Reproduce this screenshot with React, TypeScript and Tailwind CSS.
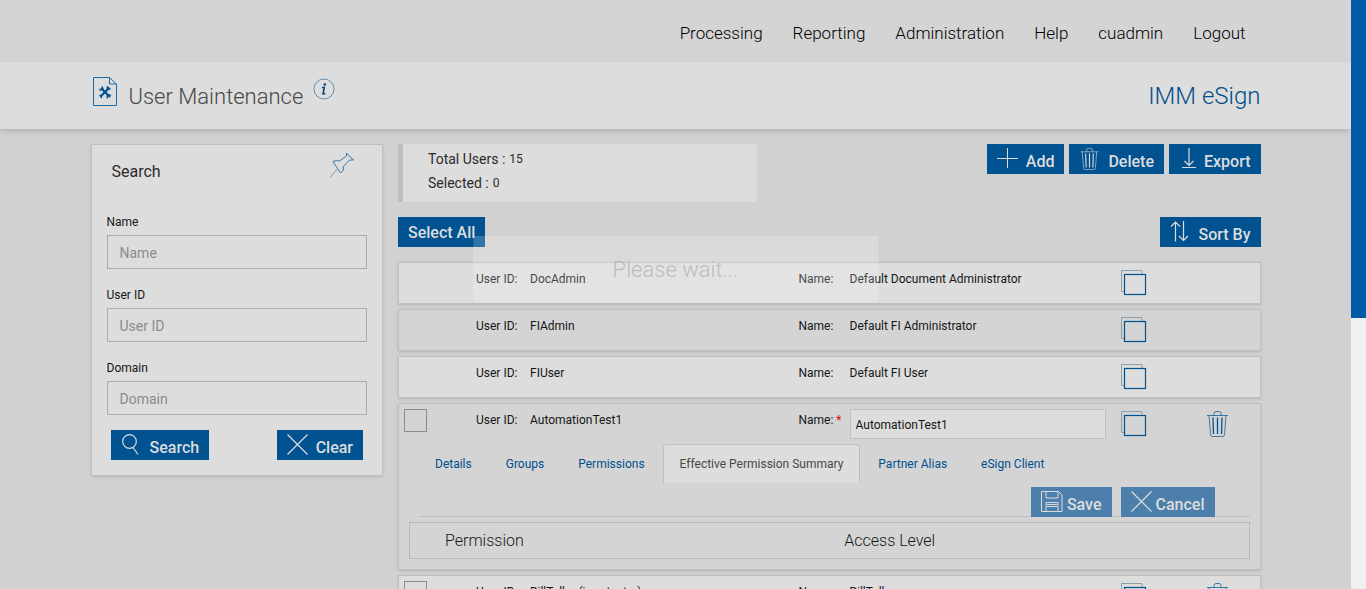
import type { ReactNode } from 'react';

const navLinks = ['Processing', 'Reporting', 'Administration', 'Help', 'cuadmin', 'Logout'];

const searchFields = [
  { id: 'search-name', label: 'Name' },
  { id: 'search-user-id', label: 'User ID' },
  { id: 'search-domain', label: 'Domain' },
];

const tabs = [
  'Details',
  'Groups',
  'Permissions',
  'Effective Permission Summary',
  'Partner Alias',
  'eSign Client',
];

const users = [
  { id: 'DocAdmin', name: 'Default Document Administrator', editable: false, open: false },
  { id: 'FIAdmin', name: 'Default FI Administrator', editable: false, open: false },
  { id: 'FIUser', name: 'Default FI User', editable: false, open: false },
  { id: 'AutomationTest1', name: 'AutomationTest1', editable: true, open: true },
  { id: 'BillTeller (jmmtester)', name: 'BillTeller', editable: true, open: false },
];

function PlusIcon() {
  return (
    <svg width="21" height="22" viewBox="0 0 21 22" fill="none" stroke="currentColor">
      <path d="M10.5 0v20M0 10.5h21" />
    </svg>
  );
}

function CrossIcon() {
  return (
    <svg width="21" height="22" viewBox="0 0 21 22" fill="none" stroke="currentColor" strokeWidth="1.2">
      <path d="M.5.5l20 20M20.5.5l-20 20" />
    </svg>
  );
}

function SearchIcon() {
  return (
    <svg width="21" height="22" viewBox="0 0 21 22" fill="none" stroke="currentColor" strokeWidth="1.2">
      <circle cx="8.5" cy="7.5" r="6.800" />
      <path d="M12 13.500l5 7" />
    </svg>
  );
}

function DownloadIcon() {
  return (
    <svg width="17" height="22" viewBox="0 0 17 22" fill="none" stroke="currentColor" strokeWidth="1.2">
      <path d="M10 0v17.500M5.500 13l4.500 4.500 4.500-4.500M3 19.500h14" />
    </svg>
  );
}

function SortIcon() {
  return (
    <svg width="20" height="22" viewBox="0 0 20 22" fill="none" stroke="currentColor" strokeWidth="1.2">
      <path d="M5.500 20.500V1M1 5.500L5.500 1 10 5.500M13.500 0v19.500M9 15l4.500 4.500L18 15" />
    </svg>
  );
}

function SaveIcon() {
  return (
    <svg width="22" height="22" viewBox="0 0 22 22" fill="none" stroke="currentColor">
      <path d="M.5.500h17l3.500 3.500v16.500H.5zM5 .500v6.500h12v-6.500M5 20.500v-9h12v9M6 13.500h10M6 15.500h10" />
    </svg>
  );
}

function TrashIcon({ className }: { className?: string }) {
  return (
    <svg className={className} width="21" height="26" viewBox="0 0 21 26" fill="none" stroke="currentColor">
      <path d="M0 4.500h21M7 4.500v-2q0-2 2-2h3q2 0 2 2v2M2 4.500l1.500 19q.2 2 1.500 2h11q1.300 0 1.500-2l1.500-19" strokeOpacity=".7" />
      <path d="M6 6.500l.5 16.500M10.500 6.500V23M15 6.500L14.500 23" strokeWidth="1.300" />
    </svg>
  );
}

function CopyIcon() {
  return (
    <svg width="26" height="26" viewBox="0 0 26 26" fill="none" stroke="#00528f">
      <path d="M4 21.500H.5V.5h20.500V4" stroke="#8b9fac" />
      <rect x="3.500" y="4.500" width="21" height="20" strokeWidth="1.200" />
    </svg>
  );
}

function PageIcon() {
  return (
    <svg width="24" height="30" viewBox="0 0 24 30" fill="none" stroke="#1d6ca5">
      <path d="M.5.5h16l7 6.500v21.500H.5zM16.500.5V7h7" />
      <path d="M8 11l9 9M16.500 10.500L7.500 19.500" stroke="#00528f" strokeWidth="2.200" />
      <path d="M6 12.500q2.500 1.500 4-1l-1-2M18 18.500q-2.500-1.500-4 .5l.5 2.500M14.500 9l-.5 3 3.500 0M6.500 18l2.500 3" stroke="#00528f" strokeWidth="1.300" />
    </svg>
  );
}

function InfoIcon() {
  return (
    <svg width="22" height="22" viewBox="0 0 22 22" fill="none">
      <circle cx="11" cy="11" r="10" stroke="#5a84a6" strokeWidth=".9" />
      <circle cx="11.800" cy="6.500" r="1.300" fill="#00437a" />
      <path d="M9 9.500h2.300l-1.300 6.300h2.300" stroke="#00437a" strokeWidth="1.500" />
    </svg>
  );
}

function PinIcon() {
  return (
    <svg width="26" height="26" viewBox="0 0 26 26" fill="none" stroke="#3a76a3">
      <path d="M17.500 1l7 7-4 0-6.500 7 .5 3-3 3L4 9.500l3.500-1 3 .5 7-5z" />
      <path d="M8.500 16.500L1 25.500" stroke="#7f9cb1" />
    </svg>
  );
}

type ButtonProps = {
  label: string;
  icon?: ReactNode;
  className?: string;
};

function Button({ label, icon, className = 'gap-2 bg-[#005291]' }: ButtonProps) {
  return (
    <button type="button" className={`flex h-[30px] items-center px-2.5 text-base font-medium text-[#dddddd] ${className}`}>
      {icon}
      <span className={icon ? 'pt-1.5' : 'pt-0.5'}>{label}</span>
    </button>
  );
}

function SearchPanel() {
  return (
    <form className="w-1/4 shrink-0 self-start border border-[#bfbfbf] bg-[#dddddd] px-[15px] pb-[15px] shadow-sm">
      <div className="flex h-[66px] items-start justify-between pt-[7px] pr-3 pl-[5px]">
        <h2 className="pt-2 text-base leading-6 text-[#2b2b2b]">Search</h2>
        <button type="button" aria-label="Pin search panel">
          <PinIcon />
        </button>
      </div>
      {searchFields.map((field) => (
        <div key={field.id} className="mb-[15px]">
          <label htmlFor={field.id} className="block h-6 text-xs leading-[22px]">
            {field.label}
          </label>
          <input
            id={field.id}
            type="text"
            placeholder={field.label}
            className="block h-[34px] w-full border border-[#acacac] px-3 pt-0.5 text-sm placeholder:text-[#8b8b8b]"
          />
        </div>
      ))}
      <div className="flex justify-between px-1">
        <Button label="Search" icon={<SearchIcon />} />
        <Button label="Clear" icon={<CrossIcon />} />
      </div>
    </form>
  );
}

function PermissionSummary() {
  return (
    <div className="pr-2.5 pb-2.5 pl-2.5">
      <div className="flex pl-2.5">
        {tabs.map((tab) => (
          <button
            key={tab}
            type="button"
            className={`mr-0.5 h-[39px] rounded-t border border-b-0 text-xs ${
              tab === 'Effective Permission Summary'
                ? 'border-[#bfbfbf] bg-[#dddddd] px-4 text-[#484848]'
                : 'border-transparent px-[15px] text-[#004f8c]'
            }`}
          >
            {tab}
          </button>
        ))}
      </div>
      <div className="mt-1 mb-[5px] ml-2.5 flex h-[30px] justify-end gap-[9px] border-b border-[#bfbfbf] pr-[35px]">
        <Button label="Save" icon={<SaveIcon />} className="gap-1 bg-[#4c7fab]" />
        <Button label="Cancel" icon={<CrossIcon />} className="gap-1 bg-[#4c7fab]" />
      </div>
      <table className="w-full border border-[#b8b8b8] text-left text-base">
        <thead>
          <tr className="h-9">
            <th className="w-1/2 pl-[35px] font-light">Permission</th>
            <th className="w-1/2 pl-[15px] font-light">Access Level</th>
          </tr>
        </thead>
      </table>
    </div>
  );
}

function UserRow({ user, striped }: { user: (typeof users)[number]; striped: boolean }) {
  return (
    <li className={`border border-[#bfbfbf] shadow-sm ${striped ? 'bg-[#d4d4d4]' : 'bg-[#dddddd]'}`}>
      <div className="grid h-10 grid-cols-[77px_54px_1fr_51px_271px_86px_53px] items-start text-xs leading-8">
        <div className="pt-[5px] pl-[5px]">
          {user.editable && (
            <input
              type="checkbox"
              aria-label={`Select ${user.id}`}
              className="block size-[23px] appearance-none border border-[#8c8c8c]"
            />
          )}
        </div>
        <span>User ID:</span>
        <span>{user.id}</span>
        <span>
          Name:{user.open && <span className="text-red-600"> *</span>}
        </span>
        {user.open ? (
          <input
            type="text"
            aria-label="Name"
            defaultValue={user.name}
            className="mt-[5px] block h-[30px] w-[256px] border border-[#bfbfbf] bg-[#dddddd] px-[5px] pt-0.5"
          />
        ) : (
          <span>{user.name}</span>
        )}
        <button type="button" aria-label="Copy user" className="justify-self-start pt-[7px]">
          <CopyIcon />
        </button>
        {user.editable && (
          <button type="button" aria-label="Delete user" className="justify-self-start pt-[7px] text-[#00528f]">
            <TrashIcon />
          </button>
        )}
      </div>
      {user.open && <PermissionSummary />}
    </li>
  );
}

function UserList() {
  return (
    <section className="min-w-0 flex-1">
      <div className="flex items-start justify-between">
        <dl className="h-[58px] w-[359px] border-l-[5px] border-[#bfbfbf] bg-[#dddddd] pt-[3px] pl-[25px] text-sm leading-6 text-[#2b2b2b]">
          <div className="flex gap-1">
            <dt>Total Users :</dt>
            <dd className="text-xs leading-6">15</dd>
          </div>
          <div className="flex gap-1">
            <dt>Selected :</dt>
            <dd className="text-xs leading-6">0</dd>
          </div>
        </dl>
        <div className="flex gap-[5px]">
          <Button label="Add" icon={<PlusIcon />} />
          <Button label="Delete" icon={<TrashIcon className="h-[22px]" />} />
          <Button label="Export" icon={<DownloadIcon />} />
        </div>
      </div>
      <div className="mt-[15px] mb-[15px] flex justify-between">
        <Button label="Select All" />
        <Button label="Sort By" icon={<SortIcon />} />
      </div>
      <ul className="space-y-[5px]">
        {users.map((user, index) => (
          <UserRow key={user.id} user={user} striped={index % 2 === 1} />
        ))}
      </ul>
    </section>
  );
}

export default function App() {
  return (
    <div className="flex h-screen overflow-hidden bg-[#d1d1d1] font-['Roboto',sans-serif] text-[#161616]">
      <div className="relative h-full min-w-0 flex-1 overflow-hidden">
        <nav className="bg-[#d4d4d4]">
          <div className="mx-auto flex h-[62px] max-w-[1170px] items-center justify-end gap-[30px] px-[15px] pt-1.5 text-[17px] font-light text-black">
            {navLinks.map((link) => (
              <a key={link} href="#">
                {link}
              </a>
            ))}
          </div>
        </nav>

        <header className="relative bg-[#dddddd] shadow-md">
          <div className="mx-auto flex h-[67px] max-w-[1170px] items-center justify-between font-light">
            <div className="flex items-center">
              <div className="ml-0.5 pb-2">
                <PageIcon />
              </div>
              <h1 className="ml-3 pt-0.5 text-[22px] text-[#484848]">User Maintenance</h1>
              <button type="button" aria-label="Information" className="ml-2.5 pb-3.5">
                <InfoIcon />
              </button>
            </div>
            <span className="text-2xl text-[#004f8c]">IMM eSign</span>
          </div>
        </header>

        <main className="mx-auto flex max-w-[1170px] gap-[15px] pt-[15px]">
          <SearchPanel />
          <UserList />
        </main>

        {/* Loading message over the list */}
        <div
          role="status"
          className="absolute top-[236px] left-1/2 flex h-[66px] w-[30%] -translate-x-1/2 items-center justify-center bg-white/20 text-[22px] font-light text-[#bcbcbc]"
        >
          Please wait...
        </div>
      </div>

      {/* Scroll track */}
      <div className="w-[15px] shrink-0 bg-[#f0f0f0]">
        <div className="h-[54%] bg-[#005ba6]" />
      </div>
    </div>
  );
}
